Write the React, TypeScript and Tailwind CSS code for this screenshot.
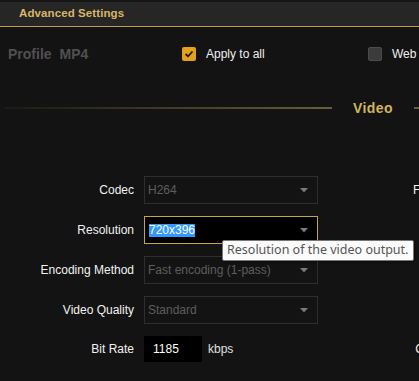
import React from "react";

function Checkbox({ checked }: { checked?: boolean }) {
  if (checked) {
    return (
      <span className="flex h-[14px] w-[14px] shrink-0 items-center justify-center rounded-[2px] bg-[#e3a11d]">
        <svg width="10" height="8" viewBox="0 0 10 8">
          <path d="M1.5 4 L4 6.3 L8.5 1.5" fill="none" stroke="#1b1408" strokeWidth="1.8" />
        </svg>
      </span>
    );
  }
  return <span className="h-[14px] w-[14px] shrink-0 rounded-[2px] border border-[#4c4c4c] bg-[#3b3b3b]" />;
}

function Arrow() {
  return (
    <svg width="8" height="5" viewBox="0 0 8 5" className="ml-auto mr-[9px] shrink-0">
      <path d="M0 0 H8 L4 4.5 Z" fill="#7a7a7a" />
    </svg>
  );
}

function Row({ label, children }: { label: string; children: React.ReactNode }) {
  return (
    <div className="relative flex h-[28px] items-center">
      <span className="w-[134px] shrink-0 text-right text-[12px] text-[#f2f2f2]">{label}</span>
      {children}
    </div>
  );
}

function Select({ value }: { value: string }) {
  return (
    <div className="ml-[10px] flex h-[28px] w-[174px] shrink-0 items-center border border-[#2e2e2e] pl-[3px]">
      <span className="text-[12px] text-[#5e5e5e]">{value}</span>
      <Arrow />
    </div>
  );
}

export default function App() {
  return (
    <div className="h-[381px] w-[419px] overflow-hidden bg-[#131313] font-['Liberation_Sans',Arial,sans-serif]">
      <div className="flex h-[27px] items-center border-t-2 border-b border-t-[#161616] border-b-[#c29b45] bg-[#262626] pl-[19px]">
        <span className="text-[11.5px] font-bold tracking-[0.1px] text-[#d8b666]">Advanced Settings</span>
      </div>

      <div className="mt-[20px] flex h-[14px] items-center whitespace-nowrap">
        <div className="w-[182px] shrink-0 pl-[8px] text-[14px] font-bold text-[#505050]">
          Profile<span className="ml-[8px]">MP4</span>
        </div>
        <div className="flex w-[186px] shrink-0 items-center">
          <Checkbox checked />
          <span className="ml-[10px] text-[12px] text-[#f0f0f0]">Apply to all</span>
        </div>
        <Checkbox />
        <span className="ml-[10px] text-[12px] text-[#f0f0f0]">Web</span>
      </div>

      <div className="mt-[37px] flex h-[20px] items-center">
        <div className="ml-[4px] h-[2px] w-[328px] shrink-0 bg-gradient-to-r from-[#1c1a15] to-[#6c5d37]" />
        <span className="ml-[21px] shrink-0 text-[14px] font-bold tracking-[0.4px] text-[#d4b35d]">Video</span>
        <div className="ml-[21px] h-[2px] flex-1 bg-[#6c5d37]" />
      </div>

      <div className="mt-[58px] flex flex-col gap-[12px] whitespace-nowrap">
        <Row label="Codec">
          <Select value="H264" />
          <span className="ml-[95px] shrink-0 text-[12px] text-[#f2f2f2]">F</span>
        </Row>
        <Row label="Resolution">
          <div className="ml-[10px] flex h-[28px] w-[174px] shrink-0 items-center border border-[#c8a34e] bg-black pl-[4px]">
            <span className="bg-[#3399ff] text-[12px] leading-[13px] text-white">720x396</span>
            <Arrow />
          </div>
          <div className="absolute left-[222px] top-[24px] z-10 flex h-[21px] w-[192px] items-center rounded-[2px] border border-[#777] bg-[#fbfbfb] pl-[4px] shadow-[1px_1px_2px_rgba(0,0,0,0.4)]">
            <span className="font-['Noto_Sans',sans-serif] text-[12.5px] text-[#555]">Resolution of the video output.</span>
          </div>
        </Row>
        <Row label="Encoding Method">
          <Select value="Fast encoding (1-pass)" />
        </Row>
        <Row label="Video Quality">
          <Select value="Standard" />
        </Row>
        <div className="flex h-[26px] items-center">
          <span className="w-[134px] shrink-0 text-right text-[12px] text-[#f2f2f2]">Bit Rate</span>
          <div className="ml-[10px] flex h-[26px] w-[58px] shrink-0 items-center bg-black pl-[9px]">
            <span className="text-[12px] text-white">1185</span>
          </div>
          <span className="ml-[6px] shrink-0 text-[12px] text-[#e0e0e0]">kbps</span>
          <span className="ml-[182px] shrink-0 text-[12px] text-[#f2f2f2]">C</span>
        </div>
      </div>
    </div>
  );
}
